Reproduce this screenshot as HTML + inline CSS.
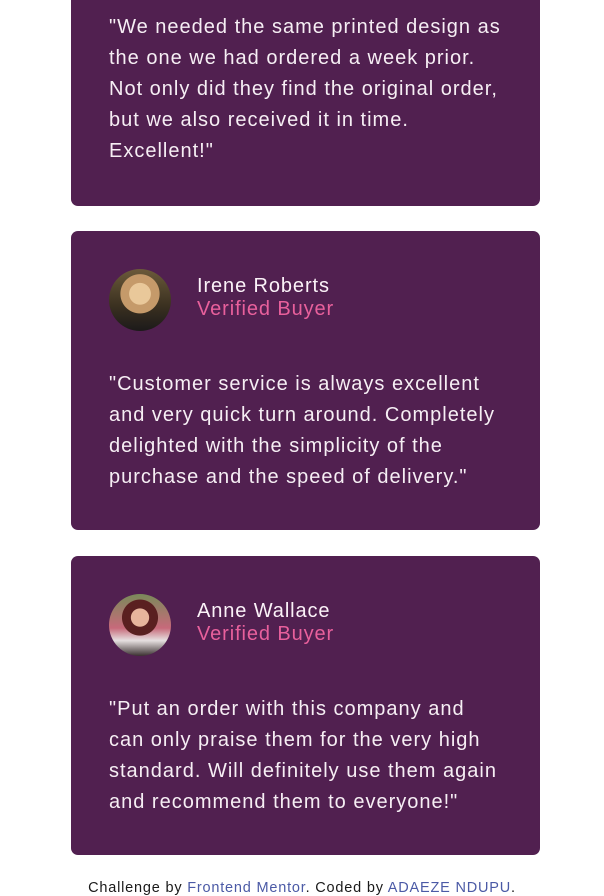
<!DOCTYPE html>
<html><head><meta charset="utf-8"><style>
body{margin:0;width:604px;height:895px;overflow:hidden;background:#fff;font-family:"Liberation Sans",sans-serif;position:relative}
.card{position:absolute;left:71px;width:469px;background:#512050;border-radius:7px}
.q{position:absolute;left:38px;color:#f6eef4;font-size:20px;line-height:31px;white-space:nowrap;letter-spacing:1.0px}
.av{position:absolute;left:38px;top:38px;width:62px;height:62px;border-radius:50%;overflow:hidden}
.nm{position:absolute;left:126px;top:44px;color:#fbf2f8;font-size:20px;line-height:23px;white-space:nowrap;letter-spacing:0.9px}
.nm span{display:block;color:#e8609c}
.foot{position:absolute;top:880px;left:0;width:604px;text-align:center;font-size:14.5px;color:#1a1a1a;letter-spacing:0.8px}
.foot a{color:#4b5aa6;text-decoration:none}
</style></head><body>
<div class="card" style="top:-40px;height:246px">
<div class="q" style="top:52px">"We needed the same printed design as<br>the one we had ordered a week prior.<br>Not only did they find the original order,<br>but we also received it in time.<br>Excellent!"</div>
</div>
<div class="card" style="top:231px;height:299px">
<div class="av" style="background:radial-gradient(circle at 50% 40%,#e9c89a 0 22%,#c59a6a 23% 40%,transparent 41%),linear-gradient(180deg,#6b5a3a,#3a3020 60%,#1c1a1a)"></div>
<div class="nm">Irene Roberts<span>Verified Buyer</span></div>
<div class="q" style="top:138px">"Customer service is always excellent<br>and very quick turn around. Completely<br>delighted with the simplicity of the<br>purchase and the speed of delivery."</div>
</div>
<div class="card" style="top:556px;height:299px">
<div class="av" style="background:radial-gradient(circle at 50% 38%,#e8b59c 0 18%,#5a2020 19% 36%,transparent 37%),linear-gradient(180deg,#7a8a5a,#c76a7a 55%,#e6e0e0 75%,#3a3030)"></div>
<div class="nm">Anne Wallace<span>Verified Buyer</span></div>
<div class="q" style="top:138px">"Put an order with this company and<br>can only praise them for the very high<br>standard. Will definitely use them again<br>and recommend them to everyone!"</div>
</div>
<div class="foot">Challenge by <a>Frontend Mentor</a>. Coded by <a>ADAEZE NDUPU</a>.</div>
</body></html>
